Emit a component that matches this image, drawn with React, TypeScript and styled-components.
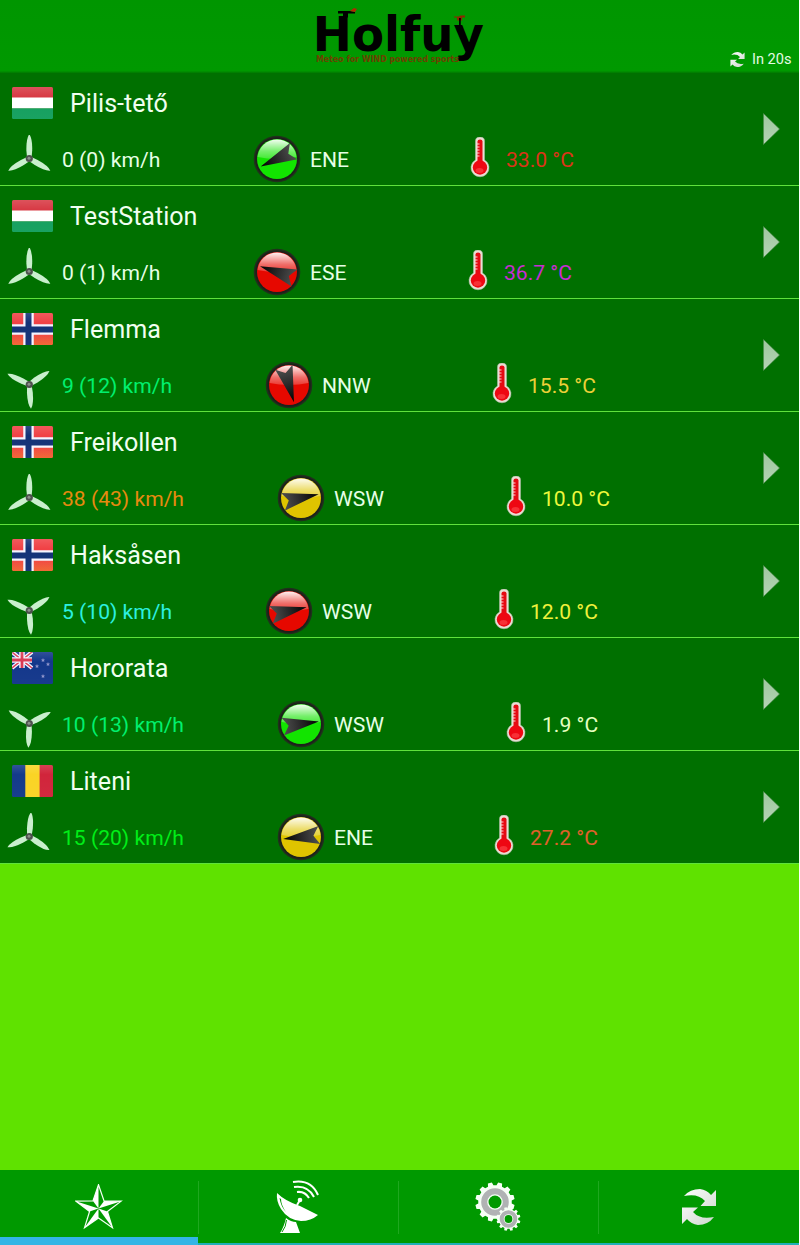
import React from "react";
import styled, { createGlobalStyle } from "styled-components";

const Global = createGlobalStyle`
  body { margin: 0; background: #fff; font-family: Roboto, "Liberation Sans", sans-serif; }
  svg { display: block; flex: none; }
`;

const Screen = styled.div`
  width: 799px;
  height: 1245px;
  display: flex;
  flex-direction: column;
  background: #5fe200;
  overflow: hidden;
`;

const Header = styled.header`
  height: 73px;
  flex: none;
  display: grid;
  grid-template-columns: 1fr 180px 1fr;
  background: linear-gradient(#009600 0, #009900 97%, #007800 100%);
`;

const Countdown = styled.div`
  grid-column: 3;
  align-self: end;
  justify-self: end;
  display: flex;
  align-items: center;
  gap: 7px;
  padding: 0 7.5px 5px 0;
  font-size: 14.6px;
  line-height: 18px;
  color: #e4fbe4;
`;

const List = styled.main`
  flex: 1;
  display: flex;
  flex-direction: column;
`;

const Row = styled.section`
  height: 112px;
  flex: none;
  display: flex;
  align-items: center;
  justify-content: space-between;
  padding-right: 19px;
  background: #007000;
  border-bottom: 1px solid #5fe23c;
`;

const Info = styled.div`
  height: 112px;
`;

const Title = styled.div`
  display: flex;
  align-items: center;
  gap: 17px;
  height: 60px;
  padding-left: 12px;
  font-size: 25.1px;
  color: #f0fff0;
`;

const Readings = styled.div<{ $wind: number; $dir: number }>`
  display: grid;
  grid-template-columns: ${(p) => p.$wind}px ${(p) => p.$dir}px auto;
  align-items: center;
  height: 52px;
`;

const Reading = styled.div<{ $gap: number; $pad?: number }>`
  display: flex;
  align-items: center;
  gap: ${(p) => p.$gap}px;
  padding-left: ${(p) => p.$pad ?? 0}px;
`;

const Value = styled.span<{ $color: string }>`
  padding-top: 2px;
  font-size: 21.1px;
  line-height: 26px;
  white-space: nowrap;
  color: ${(p) => p.$color};
`;

const Tabs = styled.nav`
  height: 75px;
  flex: none;
  display: grid;
  grid-template-columns: 198px 200px 200px 201px;
  background: #009900;
`;

const Tab = styled.div<{ $active?: boolean }>`
  position: relative;
  display: flex;
  align-items: center;
  justify-content: center;
  box-sizing: border-box;
  border-bottom: ${(p) => (p.$active ? "8px solid #33b5e5" : "2px solid #20b0b8")};
  padding-top: ${(p) => (p.$active ? 8 : 1)}px;
  &:not(:first-child)::before {
    content: "";
    position: absolute;
    left: 0;
    top: 11px;
    width: 1px;
    height: 53px;
    background: #1fa81f;
  }
`;

const Logo = () => (
  <svg width="180" height="73" viewBox="310 0 180 73">
    <g fontFamily="DejaVu Sans" fontWeight="bold">
      <text x="312.800" y="51" fontSize="48" textLength="171.200" lengthAdjust="spacingAndGlyphs">Holfuy</text>
      <text x="316" y="61.500" fontSize="8.200" fill="#6b4200" textLength="143" lengthAdjust="spacingAndGlyphs">Meteo for WIND powered sports</text>
    </g>
    <path d="M338 11h12l5 1v1.500h-7v4h-5v-4h-5z" />
    <path d="M350 11l4-3 3 1-2 3z" fill="#b02800" />
    <path d="M454 16.500h5l1-1h5v2h-3v3h-5v-3h-3z" fill="#8a2800" />
    <path d="M459 18h1.800v8h-1.800z" />
  </svg>
);

const Sync = ({ size }: { size: number }) => (
  <svg width={size} height={size} viewBox="0 0 34 36">
    <defs>
      <linearGradient id="sync" x1="0" y1="0" x2="1" y2="1">
        <stop offset="0" stopColor="#fff" />
        <stop offset="1" stopColor="#cdd6cd" />
      </linearGradient>
    </defs>
    <path
      fill="url(#sync)"
      d="M2 7Q8 0 18 0Q25 1 29 6L34 1V17H18.500L23 12Q16 4 2 7Z M32 28Q26 36 16 36Q9 35 5 30L0 35V18.500H16L11 23Q18 31 32 28Z"
    />
  </svg>
);

const Flag = ({ country }: { country: Country }) => (
  <svg width="41" height="32" viewBox="0 0 41 32">
    <defs>
      <linearGradient id="sheen" x1="0" y1="0" x2="0" y2="1">
        <stop offset="0" stopColor="#fff" stopOpacity="0.16" />
        <stop offset="0.3" stopColor="#fff" stopOpacity="0.04" />
        <stop offset="1" stopColor="#fff" stopOpacity="0.06" />
      </linearGradient>
      <clipPath id="flagShape">
        <rect width="41" height="32" rx="1.500" />
      </clipPath>
      <linearGradient id="norway" x1="0" y1="0" x2="0" y2="1">
        <stop offset="0.6" stopColor="#f03a3e" />
        <stop offset="1" stopColor="#f0602a" />
      </linearGradient>
    </defs>
    <g clipPath="url(#flagShape)">
      {country === "hu" && (
        <>
          <rect width="41" height="11" fill="#d6323d" />
          <rect y="10.500" width="41" height="11" fill="#fff" />
          <rect y="21.500" width="41" height="11" fill="#0b9c58" />
        </>
      )}
      {country === "no" && (
        <>
          <rect width="41" height="32" fill="url(#norway)" />
          <path d="M16.500 0V32M0 16.500H41" stroke="#f4f4ff" strokeWidth="10.500" />
          <path d="M16.500 0V32M0 16.500H41" stroke="#0a2a72" strokeWidth="6" />
        </>
      )}
      {country === "nz" && (
        <>
          <rect width="41" height="32" fill="#0a2f86" />
          <path d="M0 0L20 16M20 0L0 16" stroke="#f4f4ff" strokeWidth="4" />
          <path d="M0 0L20 16M20 0L0 16" stroke="#d8304a" strokeWidth="1.500" />
          <path d="M10 0V16M0 8H20" stroke="#f4f4ff" strokeWidth="5.500" />
          <path d="M10 0V16M0 8H20" stroke="#d8304a" strokeWidth="2.800" />
          <g fill="#8a8fc8">
            {[[31, 8], [25, 14], [36, 12], [31, 24]].map(([x, y]) => (
              <path key={`${x}-${y}`} transform={`translate(${x} ${y})`} d="M0-2L.6-.6 2-.5 1 .5 1.300 2 0 1.200-1.300 2-1 .5-2-.5-.6-.6z" />
            ))}
          </g>
        </>
      )}
      {country === "ro" && (
        <>
          <rect width="14" height="32" fill="#0a3285" />
          <rect x="13.300" width="15" height="32" fill="#fad21c" />
          <rect x="27.600" width="14" height="32" fill="#cf1c33" />
        </>
      )}
      <rect width="41" height="32" fill="url(#sheen)" />
    </g>
  </svg>
);

const Rotor = ({ angle }: { angle: number }) => (
  <svg width="46" height="48" viewBox="-23.300 -23.500 46 48">
    <g transform={`rotate(${angle})`} fill="#c9efcd">
      {[0, 120, 240].map((a) => (
        <path key={a} transform={`rotate(${a})`} d="M-2.200 0L-2.900-8Q-3.200-20 0-24.300Q3.200-20 2.900-8L2.200 0Z" />
      ))}
    </g>
    <circle r="3.600" fill="#4d514d" />
    <circle cx="-.3" cy="-.3" r="1.500" fill="#8a8e8a" />
  </svg>
);

const Compass = ({ id, color, angle }: { id: string; color: string; angle: number }) => (
  <svg width="48" height="48" viewBox="-24 -24 48 48">
    <defs>
      <linearGradient id={`gloss-${id}`} x1="0" y1="0" x2="0" y2="1">
        <stop offset="0" stopColor="#fff" stopOpacity="0.95" />
        <stop offset="0.6" stopColor="#fff" stopOpacity="0.42" />
        <stop offset="1" stopColor="#fff" stopOpacity="0.2" />
      </linearGradient>
      <linearGradient id={`needle-${id}`} x1="1" y1="0" x2="0" y2="0">
        <stop offset="0" stopColor="#000" />
        <stop offset="1" stopColor="#505050" />
      </linearGradient>
    </defs>
    <circle r="23.300" fill="#20301c" />
    <circle r="21.800" fill="#1c211a" />
    <circle r="20" fill={color} />
    <path d="M-19.500-2A19.600 19.600 0 0 1 19.500-2Q10 0 0 0T-19.500-2Z" fill={`url(#gloss-${id})`} />
    <path transform={`rotate(${angle})`} d="M18 0L-18.500-9Q-15-4-12.500 0Q-15 4-18.500 9Z" fill={`url(#needle-${id})`} />
  </svg>
);

const Thermometer = () => (
  <svg width="20" height="44" viewBox="0 1.500 20 44">
    <path d="M5.500 5.500Q5.500 1.500 10 1.500T14.500 5.500V24.500A9 9 0 1 1 5.500 24.500Z" fill="#e9dfd4" stroke="#a8b8a0" strokeWidth=".6" />
    <path d="M7.500 6Q7.500 4 10 4T12.500 6V28H7.500Z" fill="#e50a12" />
    <circle cx="10" cy="32" r="7.200" fill="#ee0712" />
    <ellipse cx="9.500" cy="35" rx="4" ry="2.500" fill="#ff5a5a" opacity=".5" />
    <path d="M7 8.500h2.500M7 11.500h2.500M7 14.500h2.500M7 17.500h2.500M7 20.500h2.500" stroke="#ffe9e9" strokeWidth=".9" />
  </svg>
);

const Chevron = () => (
  <svg width="17" height="34" viewBox="0 0 17 34">
    <defs>
      <linearGradient id="chev" x1="0" y1="0" x2="0" y2="1">
        <stop offset="0" stopColor="#9fc79f" />
        <stop offset="1" stopColor="#b4d4b4" />
      </linearGradient>
    </defs>
    <path d="M.5 1.500L16.500 17L.5 32.500Z" fill="url(#chev)" stroke="#4c8c4c" strokeWidth=".6" />
  </svg>
);

const Star = () => {
  const pt = (r: number, d: number) => {
    const a = ((d - 90) * Math.PI) / 180;
    return `${(r * Math.cos(a)).toFixed(2)} ${(r * Math.sin(a)).toFixed(2)}`;
  };
  const outline = Array.from({ length: 10 }, (_, i) => pt(i % 2 ? 9.4 : 23.8, i * 36)).join("L");
  return (
    <svg width="48" height="48" viewBox="-23.500 -24.500 48 48">
      <path d={`M${outline}Z`} fill="#009900" stroke="#f4fff4" strokeWidth="1.200" />
      {[0, 72, 144, 216, 288].map((d) => (
        <path key={d} d={`M0 0L${pt(23.8, d)}L${pt(9.4, d - 36)}Z`} fill="#fff" />
      ))}
    </svg>
  );
};

const Dish = () => (
  <svg width="44" height="54" viewBox="0 0 44 54">
    <path d="M1 13Q9 21 24 26Q36 32 42 35Q35 41 25 41Q12 40 5 29Q0 21 1 13Z" fill="#fff" />
    <path d="M3.500 18Q5 27 10 32Q5 25 5 19Z" fill="#009900" />
    <path d="M10 38Q15 42 20 42L24 53H4Q8 47 10 38Z" fill="#fff" />
    <path d="M10.500 40Q10 47 6 52" fill="none" stroke="#009900" strokeWidth="1" />
    <path d="M21 25L24 20" stroke="#fff" strokeWidth="2" />
    <circle cx="24" cy="20" r="2.300" fill="#fff" />
    <path d="M17 2Q35-1 42 15M18 7Q32 5 38 17M21 12Q29 11 33 18" fill="none" stroke="#fff" strokeWidth="2" />
  </svg>
);

const gear = (cx: number, cy: number, r: number, tooth: number, n: number) => {
  const step = (Math.PI * 2) / n;
  const at = (rad: number, a: number) => `${(cx + rad * Math.cos(a)).toFixed(2)} ${(cy + rad * Math.sin(a)).toFixed(2)}`;
  let d = "";
  for (let i = 0; i < n; i++) {
    const a = i * step + step / 2;
    d += `${i ? "L" : "M"}${at(r, a - step * 0.32)}L${at(r + tooth, a - step * 0.2)}L${at(r + tooth, a + step * 0.2)}L${at(r, a + step * 0.32)}`;
  }
  return d + "Z";
};

const Gears = () => (
  <svg width="46" height="50" viewBox="-.5 0 46 50">
    <path d={gear(19.5, 20, 16.8, 3, 12)} fill="#f6fff6" />
    <circle cx="19.500" cy="20" r="10.800" fill="none" stroke="#b0b2b4" strokeWidth="6" />
    <circle cx="19.500" cy="20" r="6.500" fill="#009900" />
    <path d={gear(33, 37, 9.8, 2.2, 12)} fill="#f6fff6" />
    <circle cx="33" cy="37" r="6.800" fill="none" stroke="#b0b2b4" strokeWidth="4" />
    <circle cx="33" cy="37" r="3.900" fill="#009900" />
  </svg>
);

type Country = "hu" | "no" | "nz" | "ro";

interface Station {
  name: string;
  country: Country;
  rotor: number;
  wind: string;
  windColor: string;
  dir: string;
  dirColor: string;
  angle: number;
  temp: string;
  tempColor: string;
  windCol: number;
  dirCol: number;
}

const green = "#12e400";
const red = "#e60800";
const yellow = "#dfc400";

const stations: Station[] = [
  { name: "Pilis-tető", country: "hu", rotor: 0, wind: "0 (0) km/h", windColor: "#e6ffe6", dir: "ENE", dirColor: green, angle: 155, temp: "33.0 °C", tempColor: "#dc3418", windCol: 253, dirCol: 217 },
  { name: "TestStation", country: "hu", rotor: 0, wind: "0 (1) km/h", windColor: "#e6ffe6", dir: "ESE", dirColor: red, angle: 199, temp: "36.7 °C", tempColor: "#c82cd4", windCol: 253, dirCol: 215 },
  { name: "Flemma", country: "no", rotor: 56, wind: "9 (12) km/h", windColor: "#00f06e", dir: "NNW", dirColor: red, angle: 74, temp: "15.5 °C", tempColor: "#ecd038", windCol: 265, dirCol: 227 },
  { name: "Freikollen", country: "no", rotor: 0, wind: "38 (43) km/h", windColor: "#e88a10", dir: "WSW", dirColor: yellow, angle: -12, temp: "10.0 °C", tempColor: "#ecf83c", windCol: 277, dirCol: 229 },
  { name: "Haksåsen", country: "no", rotor: 56, wind: "5 (10) km/h", windColor: "#2cf0e0", dir: "WSW", dirColor: red, angle: -12, temp: "12.0 °C", tempColor: "#f0f03c", windCol: 265, dirCol: 229 },
  { name: "Hororata", country: "nz", rotor: 62, wind: "10 (13) km/h", windColor: "#00f06e", dir: "WSW", dirColor: green, angle: -8, temp: "1.9 °C", tempColor: "#e6ffc0", windCol: 277, dirCol: 229 },
  { name: "Liteni", country: "ro", rotor: 4, wind: "15 (20) km/h", windColor: "#00ee18", dir: "ENE", dirColor: yellow, angle: 174, temp: "27.2 °C", tempColor: "#e0602c", windCol: 277, dirCol: 217 },
];

const App = () => (
  <>
    <Global />
    <Screen>
      <Header>
        <span />
        <Logo />
        <Countdown>
          <Sync size={15} />
          In 20s
        </Countdown>
      </Header>
      <List>
        {stations.map((s) => (
          <Row key={s.name}>
            <Info>
              <Title>
                <Flag country={s.country} />
                {s.name}
              </Title>
              <Readings $wind={s.windCol} $dir={s.dirCol}>
                <Reading $gap={10} $pad={6}>
                  <Rotor angle={s.rotor} />
                  <Value $color={s.windColor}>{s.wind}</Value>
                </Reading>
                <Reading $gap={9}>
                  <Compass id={s.name} color={s.dirColor} angle={s.angle} />
                  <Value $color="#e6ffe6">{s.dir}</Value>
                </Reading>
                <Reading $gap={16}>
                  <Thermometer />
                  <Value $color={s.tempColor}>{s.temp}</Value>
                </Reading>
              </Readings>
            </Info>
            <Chevron />
          </Row>
        ))}
      </List>
      <Tabs>
        <Tab $active><Star /></Tab>
        <Tab><Dish /></Tab>
        <Tab><Gears /></Tab>
        <Tab><Sync size={36} /></Tab>
      </Tabs>
    </Screen>
  </>
);

export default App;
